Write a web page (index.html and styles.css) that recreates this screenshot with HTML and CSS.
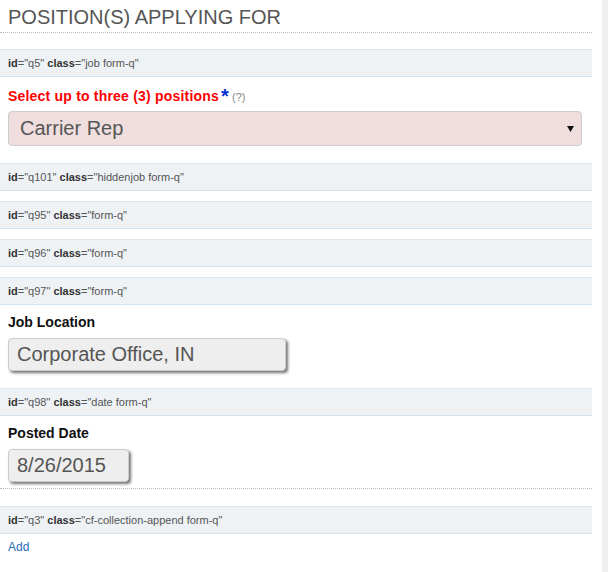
FILE: index.html
```html
<!DOCTYPE html>
<html lang="en">
<head>
  <meta charset="UTF-8">
  <meta name="viewport" content="width=device-width, initial-scale=1.0">
  <title>Position(s) Applying For</title>
  <link rel="stylesheet" href="styles.css">
</head>
<body>
  <div class="page">
    <main class="content">
      <h2 class="section-title">POSITION(S) APPLYING FOR</h2>

      <div class="q-tag"><b>id</b>="q5" <b>class</b>="job form-q"</div>
      <div class="field field-job">
        <label class="req-label">Select up to three (3) positions<span class="req">*</span><span class="help">(?)</span></label>
        <div class="select-box">
          <span>Carrier Rep</span>
          <svg class="caret" width="7" height="6" viewBox="0 0 7 6"><path d="M0 0H7L3.5 6Z" fill="#111"/></svg>
        </div>
      </div>

      <div class="q-tag"><b>id</b>="q101" <b>class</b>="hiddenjob form-q"</div>
      <div class="q-tag"><b>id</b>="q95" <b>class</b>="form-q"</div>
      <div class="q-tag"><b>id</b>="q96" <b>class</b>="form-q"</div>
      <div class="q-tag"><b>id</b>="q97" <b>class</b>="form-q"</div>
      <div class="field">
        <label class="field-label">Job Location</label>
        <div class="readonly-box box-location">Corporate Office, IN</div>
      </div>

      <div class="q-tag"><b>id</b>="q98" <b>class</b>="date form-q"</div>
      <div class="field field-last">
        <label class="field-label">Posted Date</label>
        <div class="readonly-box box-date">8/26/2015</div>
      </div>

      <div class="q-tag"><b>id</b>="q3" <b>class</b>="cf-collection-append form-q"</div>
      <a class="add-link" href="#">Add</a>
    </main>
    <div class="rail"></div>
  </div>
</body>
</html>
```

FILE: styles.css
```css
body {
  margin: 0;
  font-family: "Liberation Sans", Arial, sans-serif;
  background: #fff;
  color: #222;
}
.page {
  display: flex;
  height: 572px;
  overflow: hidden;
}
.content {
  width: 592px;
}
.rail {
  width: 6px;
  margin-left: 10px;
  background: #f0f0f0;
}
.section-title {
  margin: 0 0 16px;
  padding: 6px 8px 3px;
  font-size: 20px;
  font-weight: normal;
  line-height: 23px;
  color: #555;
  border-bottom: 1px dotted #bbb;
}
.q-tag {
  height: 26px;
  line-height: 26px;
  padding: 0 8px;
  margin-bottom: 10px;
  font-size: 11px;
  color: #555;
  background: #eef2f5;
  border-top: 1px solid #dfe7ee;
  border-bottom: 1px solid #d5e3ef;
}
.q-tag b {
  color: #333;
}
.field {
  padding: 0 10px 0 8px;
  margin: -2px 0 17px;
}
.req-label {
  display: block;
  height: 22px;
  line-height: 22px;
  font-size: 14px;
  font-weight: bold;
  letter-spacing: 0.2px;
  color: #f00;
  margin: -2px 0 4px;
}
.req {
  color: #0a2fd0;
  font-size: 20px;
  font-weight: bold;
  margin-left: 2px;
  vertical-align: -2px;
}
.help {
  font-size: 11px;
  font-weight: normal;
  letter-spacing: 0;
  color: #888;
  margin-left: 3px;
}
.select-box {
  display: flex;
  align-items: center;
  justify-content: space-between;
  height: 33px;
  padding: 0 7px 0 11px;
  font-size: 20px;
  color: #555;
  background: #f0dede;
  border: 1px solid #ccc;
  border-radius: 4px;
}
.field-label {
  display: block;
  font-size: 14px;
  font-weight: bold;
  color: #111;
  line-height: 18px;
  margin: 8px 0 7px;
}
.readonly-box {
  height: 31px;
  line-height: 31px;
  padding: 0 8px;
  font-size: 20px;
  color: #555;
  background: #eee;
  border: 1px solid #ccc;
  border-radius: 4px;
  box-shadow: 2px 2px 3px rgba(0, 0, 0, 0.55);
}
.box-location {
  width: 260px;
}
.box-date {
  width: 103px;
}
.field-last {
  padding-bottom: 6px;
  border-bottom: 1px dotted #bbb;
  margin-bottom: 17px;
}
.add-link {
  display: block;
  width: max-content;
  margin: -4px 8px 0;
  line-height: 14px;
  font-size: 12px;
  color: #2a6ebb;
  text-decoration: none;
}
```
